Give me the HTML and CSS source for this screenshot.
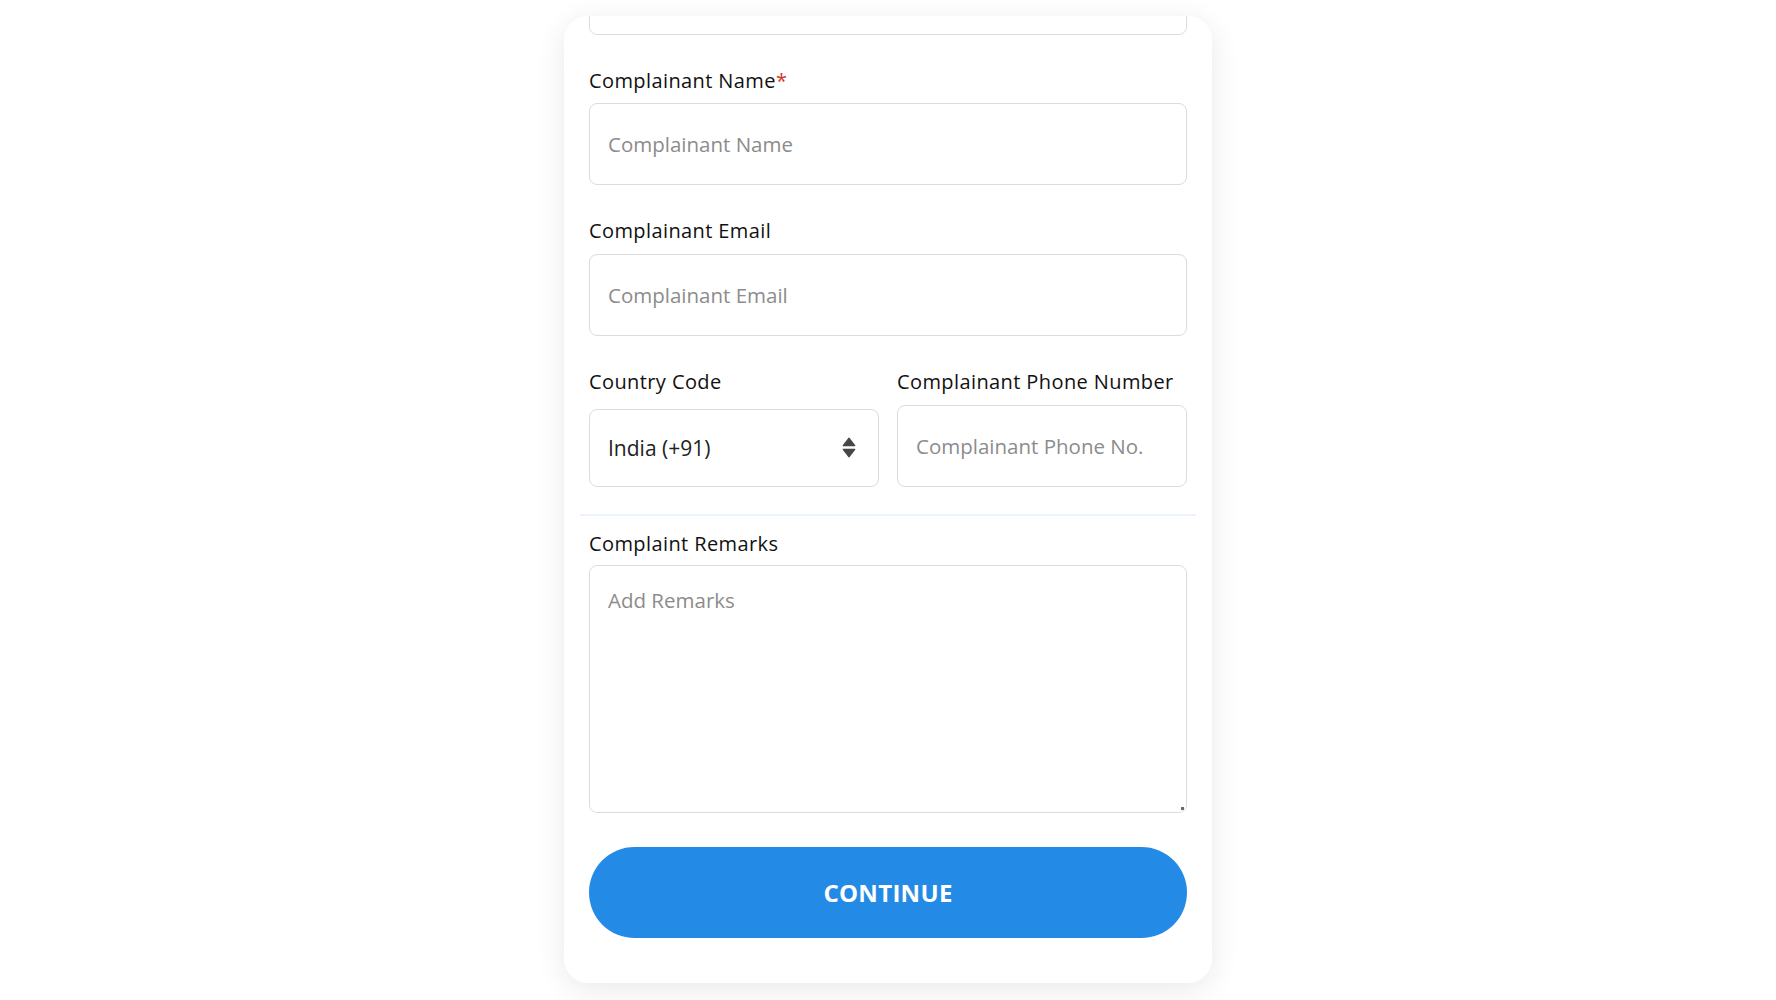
FILE: index.html
```html
<!DOCTYPE html>
<html lang="en">
<head>
<meta charset="utf-8">
<title>Complaint Form</title>
<link rel="stylesheet" href="styles.css">
</head>
<body>
<main class="card">
  <div class="field field-cut">
    <input class="input" type="text" placeholder="">
  </div>

  <div class="field field-first">
    <label class="label" for="cname">Complainant Name<span class="req">*</span></label>
    <input class="input" id="cname" type="text" placeholder="Complainant Name">
  </div>

  <div class="field">
    <label class="label" for="cemail">Complainant Email</label>
    <input class="input" id="cemail" type="email" placeholder="Complainant Email">
  </div>

  <div class="field row">
    <div class="col">
      <label class="label" for="ccode">Country Code</label>
      <div class="select-wrap">
        <select class="select" id="ccode">
          <option>India (+91)</option>
        </select>
        <svg class="select-arrow" width="14" height="21" viewBox="0 0 14 21" aria-hidden="true">
          <path d="M7 1.2 L12.8 8.6 H1.2 Z" fill="#474747" stroke="#474747" stroke-width="1.2" stroke-linejoin="round"/>
          <path d="M7 19.8 L12.8 12.4 H1.2 Z" fill="#474747" stroke="#474747" stroke-width="1.2" stroke-linejoin="round"/>
        </svg>
      </div>
    </div>
    <div class="col">
      <label class="label" for="cphone">Complainant Phone Number</label>
      <input class="input" id="cphone" type="tel" placeholder="Complainant Phone No.">
    </div>
  </div>

  <hr class="divider">

  <div class="field field-remarks">
    <label class="label label-remarks" for="cremarks">Complaint Remarks</label>
    <textarea class="textarea" id="cremarks" placeholder="Add Remarks"></textarea>
  </div>

  <button class="btn" type="button">CONTINUE</button>
</main>
</body>
</html>
```

FILE: styles.css
```css
* { box-sizing: border-box; }

html, body {
  margin: 0;
  padding: 0;
  background: #ffffff;
}

body {
  font-family: "Open Sans", "Noto Sans", "Liberation Sans", sans-serif;
  color: #111111;
  height: 1000px;
  overflow: hidden;
}

.card {
  width: 648px;
  margin: 16px auto 0;
  background: #ffffff;
  border-radius: 24px;
  box-shadow: 0 6px 30px rgba(0, 0, 0, 0.09);
  padding: 0 25px 45px;
  overflow: hidden;
}

.field {
  margin-top: 34px;
}

.field-cut {
  margin-top: 0;
}

.field-first {
  margin-top: 34px;
}

.field-cut .input {
  margin-top: -63px;
}

.label {
  display: block;
  font-size: 20px;
  line-height: 24px;
  font-weight: 500;
  letter-spacing: 0.4px;
  color: #111111;
  margin-bottom: 11px;
}

.field-first .label {
  margin-bottom: 10px;
}

.req {
  color: #d93025;
}

.input,
.select,
.textarea {
  display: block;
  width: 100%;
  height: 82px;
  border: 1px solid #dcdcdc;
  border-radius: 8px;
  background: #ffffff;
  padding: 0 18px;
  font-family: inherit;
  font-size: 20.5px;
  color: #222222;
  outline: none;
}

.input::placeholder,
.textarea::placeholder {
  color: #8c8c8c;
  opacity: 1;
}

.row {
  display: grid;
  grid-template-columns: 1fr 1fr;
  column-gap: 18px;
}

.select-wrap {
  position: relative;
  padding-top: 4px;
}

.select {
  height: 78px;
  font-size: 21px;
  appearance: none;
  -webkit-appearance: none;
  cursor: pointer;
}

.select-arrow {
  position: absolute;
  right: 23px;
  top: 32px;
  pointer-events: none;
}

.divider {
  border: 0;
  height: 2px;
  background: #ebf3fc;
  margin: 27px -9px 0;
}

.field-remarks {
  margin-top: 16px;
}

.label-remarks {
  margin-bottom: 9px;
}

.textarea {
  height: 248px;
  padding: 21px 18px 18px;
  line-height: 26px;
  resize: vertical;
}

.textarea::-webkit-resizer {
  background: linear-gradient(#6a6a6a, #6a6a6a) no-repeat right 2px bottom 2px / 3px 3px;
}

.btn {
  display: block;
  width: 100%;
  height: 91px;
  margin-top: 34px;
  border: 0;
  border-radius: 46px;
  background: #238be5;
  color: #ffffff;
  font-family: inherit;
  font-size: 24px;
  font-weight: 700;
  letter-spacing: 0.3px;
  cursor: pointer;
}
```
